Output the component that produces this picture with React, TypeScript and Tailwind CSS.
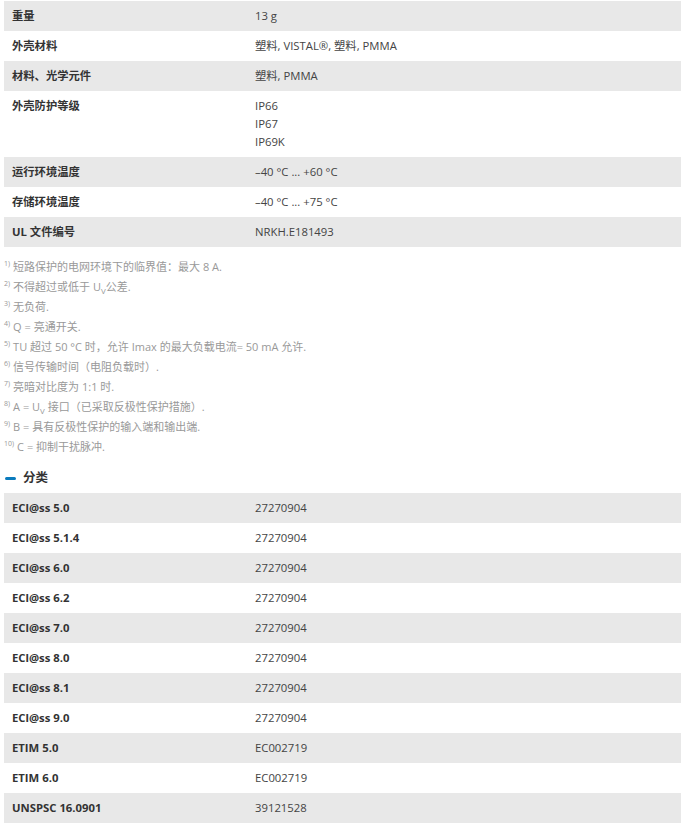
const rowsTop: [string, string[]][] = [
  ['重量', ['13 g']],
  ['外壳材料', ['塑料, VISTAL®, 塑料, PMMA']],
  ['材料、光学元件', ['塑料, PMMA']],
  ['外壳防护等级', ['IP66', 'IP67', 'IP69K']],
  ['运行环境温度', ['–40 °C ... +60 °C']],
  ['存储环境温度', ['–40 °C ... +75 °C']],
  ['UL 文件编号', ['NRKH.E181493']],
];

const rowsClass: [string, string][] = [
  ['ECl@ss 5.0', '27270904'],
  ['ECl@ss 5.1.4', '27270904'],
  ['ECl@ss 6.0', '27270904'],
  ['ECl@ss 6.2', '27270904'],
  ['ECl@ss 7.0', '27270904'],
  ['ECl@ss 8.0', '27270904'],
  ['ECl@ss 8.1', '27270904'],
  ['ECl@ss 9.0', '27270904'],
  ['ETIM 5.0', 'EC002719'],
  ['ETIM 6.0', 'EC002719'],
  ['UNSPSC 16.0901', '39121528'],
];

const Uv = () => (
  <span>
    U<sub className="text-[8px] align-baseline relative top-[3px]">V</sub>
  </span>
);

const notes: React.ReactNode[] = [
  '短路保护的电网环境下的临界值：最大 8 A.',
  <>不得超过或低于 <Uv />公差.</>,
  '无负荷.',
  'Q = 亮通开关.',
  'TU 超过 50 °C 时，允许 Imax 的最大负载电流= 50 mA 允许.',
  '信号传输时间（电阻负载时）.',
  '亮暗对比度为 1:1 时.',
  <>A = <Uv /> 接口（已采取反极性保护措施）.</>,
  'B = 具有反极性保护的输入端和输出端.',
  'C = 抑制干扰脉冲.',
];

const Row = ({ label, values, i }: { label: string; values: string[]; i: number }) => (
  <div className={`flex ${i % 2 === 0 ? 'bg-[#e8e8e8]' : 'bg-white'}`}>
    <div className="w-[251px] shrink-0 pl-2 py-[7px] font-bold text-[#333] leading-[16px]">{label}</div>
    <div className="py-[7px] text-[#444] leading-[16px] flex flex-col gap-[2px]">
      {values.map((v) => (
        <div key={v}>{v}</div>
      ))}
    </div>
  </div>
);

export default function App() {
  return (
    <div
      className="w-[681px] h-[828px] overflow-hidden bg-white pl-1 pt-px text-[11.3px]"
      style={{ fontFamily: '"Open Sans", "Noto Sans CJK SC", sans-serif' }}
    >
      <div>
        {rowsTop.map(([l, v], i) => (
          <Row key={l} label={l} values={v} i={i} />
        ))}
      </div>

      <div className="mt-[10px] flex flex-col text-[#999] text-[11px] leading-[20px]">
        {notes.map((n, i) => (
          <div key={i} className="flex">
            <span className="text-[7px] leading-[14px] mr-[3px]">{i + 1})</span>
            <span>{n}</span>
          </div>
        ))}
      </div>

      {/* 分类 */}
      <div className="mt-[13px] h-[23px] flex items-start gap-[7px]">
        <span className="mt-[7px] ml-px w-[11px] h-[3px] rounded-full bg-[#0a7bbd]" />
        <span className="font-bold text-[12.5px] text-[#333] leading-[16px]">分类</span>
      </div>
      <div>
        {rowsClass.map(([l, v], i) => (
          <Row key={l} label={l} values={[v]} i={i} />
        ))}
      </div>
    </div>
  );
}
